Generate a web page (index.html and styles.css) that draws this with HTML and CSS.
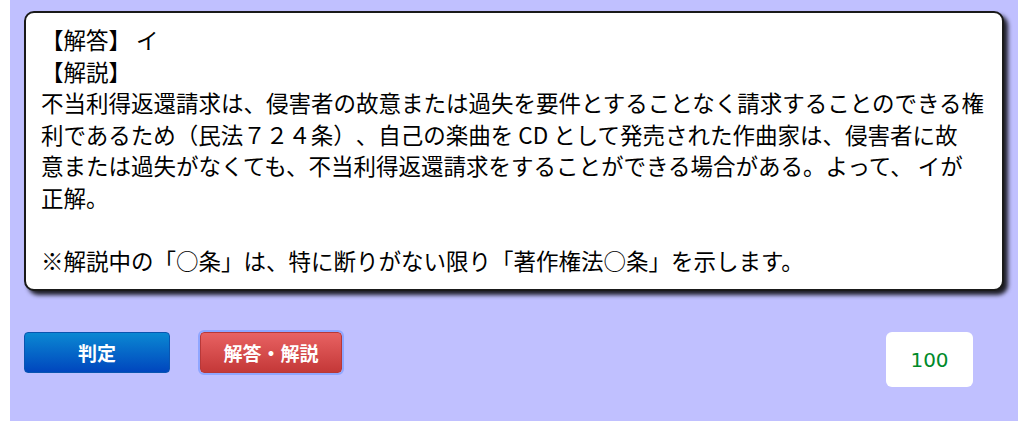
FILE: index.html
```html
<!DOCTYPE html>
<html lang="ja">
<head>
<meta charset="utf-8">
<title>解答・解説</title>
<link rel="stylesheet" href="styles.css">
</head>
<body>
<div class="page">
  <div class="answer-box">
    <p class="line">【解答】 イ</p>
    <p class="line">【解説】</p>
    <p class="line">不当利得返還請求は、侵害者の故意または過失を要件とすることなく請求することのできる権<br>利であるため（民法７２４条）、自己の楽曲を CD として発売された作曲家は、侵害者に故<br>意または過失がなくても、不当利得返還請求をすることができる場合がある。よって、 イが<br>正解。</p>
    <p class="line blank">&nbsp;</p>
    <p class="line">※解説中の「○条」は、特に断りがない限り「著作権法○条」を示します。</p>
  </div>
  <div class="actions">
    <button class="btn btn-judge" type="button">判定</button>
    <button class="btn btn-explain" type="button">解答・解説</button>
    <div class="score">100</div>
  </div>
</div>
</body>
</html>
```

FILE: styles.css
```css
html, body {
  margin: 0;
  padding: 0;
  background: #ffffff;
}

.page {
  margin-left: 10px;
  width: 1008px;
  height: 421px;
  background: #c0c0ff;
  padding: 11px 14px 0 14px;
  box-sizing: border-box;
  font-family: "Noto Sans CJK JP", "Noto Sans", sans-serif;
}

.answer-box {
  background: #ffffff;
  border: 2px solid #1a1a1a;
  border-radius: 10px;
  box-shadow: 4px 4px 4px rgba(0, 0, 0, 0.85);
  padding: 11px 8px 13px 15px;
  font-size: 22.5px;
  line-height: 31.5px;
  color: #000000;
  white-space: nowrap;
  text-spacing-trim: space-all;
}

.line {
  margin: 0;
}

.actions {
  display: flex;
  align-items: flex-start;
  margin-top: 41px;
}

.btn {
  height: 41px;
  border-radius: 4px;
  color: #ffffff;
  font-family: "Noto Sans CJK JP", sans-serif;
  font-size: 19px;
  font-weight: bold;
  padding: 0;
  cursor: pointer;
}

.btn-judge {
  width: 146px;
  border: 1px solid #0a55b0;
  background: linear-gradient(#0b88d2, #0046be);
}

.btn-explain {
  width: 142px;
  margin-left: 30px;
  border: 1px solid #b83838;
  background: linear-gradient(#e86262, #c43838);
  outline: 2px solid #8fa6ff;
}

.score {
  margin-left: auto;
  margin-right: 31px;
  width: 87px;
  height: 55px;
  background: #ffffff;
  border-radius: 6px;
  display: flex;
  align-items: center;
  justify-content: center;
  font-family: "DejaVu Sans", sans-serif;
  font-size: 20px;
  color: #008a2a;
}
```
